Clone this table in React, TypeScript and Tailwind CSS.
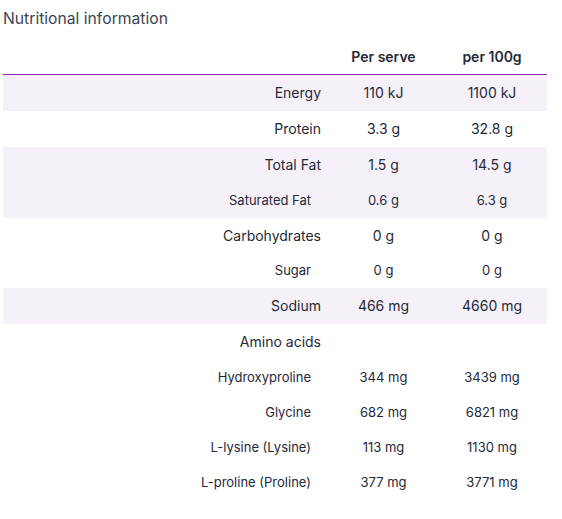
import React from "react";

type Row = { label: string; a: string; b: string; sub?: boolean; tight?: boolean };
type Group = { shaded: boolean; rows: Row[] };

const groups: Group[] = [
  { shaded: true, rows: [{ label: "Energy", a: "110 kJ", b: "1100 kJ" }] },
  { shaded: false, rows: [{ label: "Protein", a: "3.3 g", b: "32.8 g" }] },
  {
    shaded: true,
    rows: [
      { label: "Total Fat", a: "1.5 g", b: "14.5 g" },
      { label: "Saturated Fat", a: "0.6 g", b: "6.3 g", sub: true },
    ],
  },
  {
    shaded: false,
    rows: [
      { label: "Carbohydrates", a: "0 g", b: "0 g" },
      { label: "Sugar", a: "0 g", b: "0 g", sub: true, tight: true },
    ],
  },
  { shaded: true, rows: [{ label: "Sodium", a: "466 mg", b: "4660 mg" }] },
  {
    shaded: false,
    rows: [
      { label: "Amino acids", a: "", b: "" },
      { label: "Hydroxyproline", a: "344 mg", b: "3439 mg", sub: true },
      { label: "Glycine", a: "682 mg", b: "6821 mg", sub: true },
      { label: "L-lysine (Lysine)", a: "113 mg", b: "1130 mg", sub: true },
      { label: "L-proline (Proline)", a: "377 mg", b: "3771 mg", sub: true },
    ],
  },
];

function rowClass(r: Row) {
  if (r.tight) return "flex h-[34px] items-center text-[13px]";
  if (r.sub) return "flex h-[35px] items-center text-[13px]";
  return "flex h-[36px] items-center pb-[1px] text-[14px]";
}

export default function App() {
  return (
    <div
      className="min-h-[519px] w-[562px] bg-white px-[3px] pt-[6px] text-[#1f2937]"
      style={{ fontFamily: "Inter, 'Noto Sans', sans-serif" }}
    >
      <div className="pt-[1px] text-[15.7px] leading-6 text-[#3b4452]">Nutritional information</div>
      <div className="mt-[7px] w-[544px]">
        <div className="flex h-[37px] items-center border-b border-[#8c1fae] text-[14px] font-semibold text-[#1f2937]">
          <div className="w-[327px]" />
          <div className="w-[107px] text-center">Per serve</div>
          <div className="w-[110px] text-center">per 100g</div>
        </div>
        {groups.map((g, gi) => (
          <div key={gi} className={g.shaded ? "bg-[#f6f1f9]" : "bg-white"}>
            {g.rows.map((r, ri) => (
              <div key={ri} className={rowClass(r)}>
                <div className={r.sub ? "w-[327px] pr-[19px] text-right" : "w-[327px] pr-[9px] text-right"}>
                  {r.label}
                </div>
                <div className="w-[107px] text-center">{r.a}</div>
                <div className="w-[110px] text-center">{r.b}</div>
              </div>
            ))}
          </div>
        ))}
      </div>
    </div>
  );
}
